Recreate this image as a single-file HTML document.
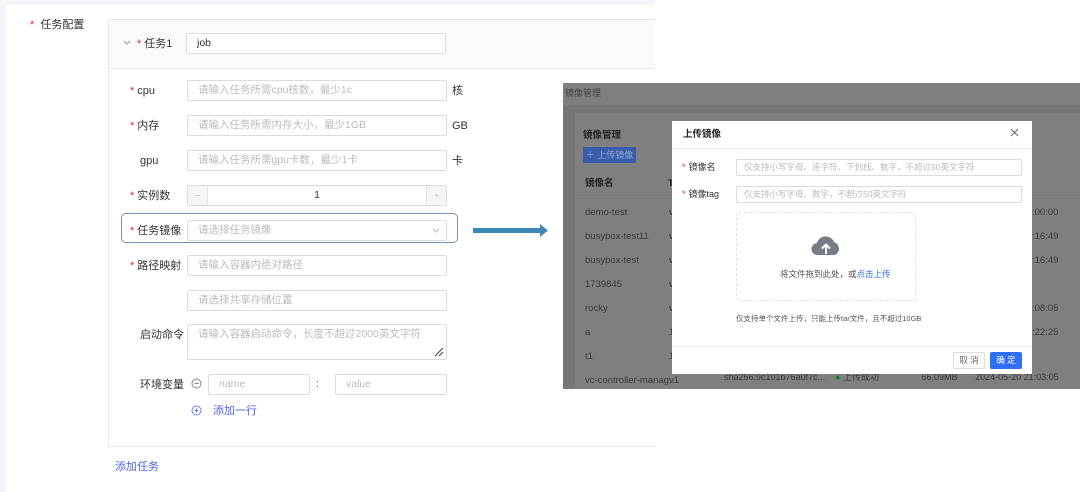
<!DOCTYPE html>
<html><head><meta charset="utf-8"><style>
*{margin:0;padding:0;box-sizing:border-box}
body{width:1080px;height:492px;background:#fff;position:relative;overflow:hidden;font-family:"Liberation Sans","Noto Sans CJK SC",sans-serif;font-size:11px;color:#333}
.a{position:absolute}
.lbl{position:absolute;font-size:11px;color:#333;line-height:14px}
.req{color:#f5222d;margin-right:3px}
.inp{position:absolute;border:1px solid #dcdcdc;background:#fff;color:#bbb;font-size:10.5px;padding-left:10px;line-height:19px;height:21px;border-radius:2px}
</style></head><body>
<div class="a" style="left:0;top:0;width:655px;height:492px;background:#f3f4f7"></div>
<div class="a" style="left:6px;top:5px;width:649px;height:487px;background:#fff"></div>
<div class="lbl" style="left:30px;top:18px"><span class="req">*</span> 任务配置</div>
<!-- card -->
<div class="a" style="left:108px;top:19px;width:547px;height:428px;border:1px solid #e8e8e8;border-right:none;background:#fff"></div>
<div class="a" style="left:109px;top:20px;width:546px;height:49px;background:#fafafa;border-bottom:1px solid #ebebeb"></div>
<svg class="a" style="left:123px;top:40px" width="8" height="6"><path d="M1 1L4 4L7 1" stroke="#999" fill="none"/></svg>
<div class="lbl" style="left:137px;top:37px"><span class="req">*</span>任务1</div>
<div class="inp" style="left:186px;top:33px;width:260px;color:#333">job</div>

<div class="lbl" style="left:130px;top:84px"><span class="req">*</span>cpu</div>
<div class="inp" style="left:187px;top:80px;width:260px">请输入任务所需cpu核数，最少1c</div>
<div class="lbl" style="left:452px;top:84px">核</div>
<div class="lbl" style="left:130px;top:119px"><span class="req">*</span>内存</div>
<div class="inp" style="left:187px;top:115px;width:260px">请输入任务所需内存大小，最少1GB</div>
<div class="lbl" style="left:452px;top:119px">GB</div>
<div class="lbl" style="left:140px;top:154px">gpu</div>
<div class="inp" style="left:187px;top:150px;width:260px">请输入任务所需gpu卡数，最少1卡</div>
<div class="lbl" style="left:452px;top:154px">卡</div>
<div class="lbl" style="left:130px;top:189px"><span class="req">*</span>实例数</div>
<div class="inp" style="left:187px;top:185px;width:260px;padding:0"><div class="a" style="left:0;top:0;width:20px;height:19px;background:#f5f5f7;border-right:1px solid #e5e5e5;color:#ccc;text-align:center">–</div><div class="a" style="left:20px;top:0;width:218px;text-align:center;color:#333">1</div><div class="a" style="right:0;top:0;width:20px;height:19px;background:#f5f5f7;border-left:1px solid #e5e5e5;color:#ccc;text-align:center;font-size:8px">+</div></div>
<div class="a" style="left:121px;top:213px;width:337px;height:30px;border:1.5px solid #6f95bb;border-radius:5px"></div>
<div class="lbl" style="left:130px;top:224px"><span class="req">*</span>任务镜像</div>
<div class="inp" style="left:187px;top:220px;width:260px">请选择任务镜像</div>
<svg class="a" style="left:432px;top:228px" width="8" height="6"><path d="M1 1L4 4L7 1" stroke="#bbb" fill="none"/></svg>
<div class="lbl" style="left:130px;top:259px"><span class="req">*</span>路径映射</div>
<div class="inp" style="left:187px;top:255px;width:260px">请输入容器内绝对路径</div>
<div class="inp" style="left:187px;top:290px;width:260px">请选择共享存储位置</div>
<div class="lbl" style="left:140px;top:328px">启动命令</div>
<div class="inp" style="left:187px;top:324px;width:260px;height:36px">请输入容器启动命令，长度不超过2000英文字符</div>
<svg class="a" style="left:434px;top:347px" width="10" height="10"><path d="M1 9L9 1M5 9L9 5" stroke="#444" stroke-width="1"/></svg>
<div class="lbl" style="left:140px;top:378px">环境变量</div>
<svg class="a" style="left:191px;top:378px" width="11" height="11"><circle cx="5.5" cy="5.5" r="4.5" stroke="#888" fill="none"/><path d="M3.5 5.5H7.5" stroke="#888"/></svg>
<div class="inp" style="left:208px;top:374px;width:102px">name</div>
<div class="lbl" style="left:316px;top:377px;color:#666">:</div>
<div class="inp" style="left:335px;top:374px;width:112px">value</div>
<svg class="a" style="left:191px;top:405px" width="11" height="11"><circle cx="5.5" cy="5.5" r="4.5" stroke="#6b7ff5" fill="none"/><path d="M3.5 5.5H7.5M5.5 3.5V7.5" stroke="#6b7ff5"/></svg>
<div class="lbl" style="left:213px;top:404px;color:#4d63f0">添加一行</div>
<div class="lbl" style="left:115px;top:460px;color:#4d63f0">添加任务</div>

<!-- arrow -->
<div class="a" style="left:473px;top:228px;width:68px;height:5px;background:#3d87b8"></div>
<svg class="a" style="left:540px;top:224px" width="9" height="13"><path d="M0 0L8 6.5L0 13Z" fill="#3d87b8"/></svg>

<!-- screenshot -->
<div class="a" style="left:563px;top:83px;width:517px;height:306px;background:#7f7f7f"></div>
<div class="a" style="left:563px;top:105px;width:517px;height:8px;background:#767676"></div>
<div class="a" style="left:563px;top:105px;width:12px;height:284px;background:#767676"></div>
<div class="lbl" style="left:565px;top:86px;font-size:9px;color:#444">镜像管理</div>
<div class="lbl" style="left:583px;top:129px;font-size:9.5px;color:#222;font-weight:bold">镜像管理</div>
<div class="a" style="left:583px;top:147px;width:53px;height:16px;background:#3a5daa;color:#8ea4d8;font-size:9px;line-height:16px;text-align:center">＋ 上传镜像</div>
<div class="lbl" style="left:585px;top:177px;font-size:9.5px;color:#222;font-weight:bold">镜像名</div>
<div class="lbl" style="left:668px;top:177px;font-size:9.5px;color:#222;font-weight:bold">T</div>
<div class="a" style="left:575px;top:195px;width:505px;height:1px;background:#777"></div>
<div class="a" style="font-size:9.5px;color:#3a3a3a;left:585px;top:201px;line-height:24px">demo-test<br>busybox-test11<br>busybox-test<br>1739845<br>rocky<br>a<br>t1<br>vc-controller-manag...</div>
<div class="a" style="font-size:9.5px;color:#3a3a3a;left:669px;top:201px;line-height:24px">v<br>v<br>v<br>v<br>v<br>1<br>1<br>v1</div>
<div class="a" style="font-size:9.5px;color:#3a3a3a;left:1032px;top:201px;line-height:24px">:00:00<br>:16:49<br>:16:49<br>&nbsp;<br>:08:05<br>:22:25</div>
<div class="a" style="font-size:9px;color:#3a3a3a;left:724px;top:370px">sha256:9c101b76a0f7c...&nbsp;&nbsp;&nbsp;&nbsp;<span style="color:#1a7a3a">●</span> 上传成功&nbsp;&nbsp;&nbsp;&nbsp;&nbsp;&nbsp;&nbsp;&nbsp;&nbsp;&nbsp;&nbsp;&nbsp;&nbsp;&nbsp;&nbsp;&nbsp;&nbsp;66.09MB&nbsp;&nbsp;&nbsp;&nbsp;&nbsp;&nbsp;&nbsp;2024-05-20 21:03:05</div>

<!-- modal -->
<div class="a" style="left:672px;top:121px;width:360px;height:253px;background:#fff"></div>
<div class="lbl" style="left:683px;top:128px;font-size:9.5px;color:#222;font-weight:bold">上传镜像</div>
<svg class="a" style="left:1010px;top:128px" width="9" height="9"><path d="M1 1L8 8M8 1L1 8" stroke="#666" stroke-width="1"/></svg>
<div class="a" style="left:672px;top:148px;width:360px;height:1px;background:#eee"></div>
<div class="lbl" style="left:682px;top:160px;font-size:9px"><span class="req">*</span>镜像名</div>
<div class="inp" style="left:736px;top:159px;width:286px;height:17px;font-size:8.5px;line-height:15px;padding-left:7px">仅支持小写字母、连字符、下划线、数字，不超过50英文字符</div>
<div class="lbl" style="left:682px;top:187px;font-size:9px"><span class="req">*</span>镜像tag</div>
<div class="inp" style="left:736px;top:186px;width:286px;height:17px;font-size:8.5px;line-height:15px;padding-left:7px">仅支持小写字母、数字，不超过50英文字符</div>
<div class="a" style="left:736px;top:212px;width:180px;height:89px;border:1px dashed #e2e2e2;border-radius:3px"></div>
<svg class="a" style="left:811px;top:234px" width="30" height="22"><path d="M7 21A6 6 0 0 1 6 9A9 9 0 0 1 23 8A7 7 0 0 1 24 21Z" fill="#777c86"/><path d="M15 20V11M11 14.5L15 10.5L19 14.5" stroke="#fff" stroke-width="2" fill="none"/></svg>
<div class="lbl" style="left:780px;top:267px;font-size:8.5px;color:#555">将文件拖到此处，或<span style="color:#2f6ef0">点击上传</span></div>
<div class="lbl" style="left:736px;top:312px;font-size:7.5px;color:#555">仅支持单个文件上传，只能上传tar文件，且不超过10GB</div>
<div class="a" style="left:672px;top:346px;width:360px;height:1px;background:#f0f0f0"></div>
<div class="a" style="left:953px;top:352px;width:32px;height:17px;border:1px solid #ddd;border-radius:2px;font-size:8.5px;color:#666;text-align:center;line-height:15px">取 消</div>
<div class="a" style="left:990px;top:352px;width:32px;height:17px;background:#2f6ef5;border-radius:2px;font-size:8.5px;color:#fff;text-align:center;line-height:17px">确 定</div>
</body></html>
